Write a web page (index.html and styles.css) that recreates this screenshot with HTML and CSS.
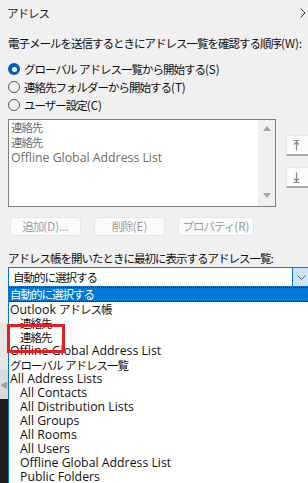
FILE: index.html
```html
<!DOCTYPE html>
<html lang="ja">

<head>
  <meta charset="UTF-8">
  <meta name="viewport" content="width=device-width, initial-scale=1.0">
  <title>アドレス</title>
  <link rel="stylesheet" href="styles.css">
</head>

<body>
  <div class="page">
    <div class="head">
      <span class="headTitle">アドレス</span>
      <svg class="more" width="6" height="10" viewBox="0 0 6 10">
        <polyline points="0.5,0.5 5,5 0.5,9.5" fill="none" stroke="#333" stroke-width="1" />
      </svg>
    </div>

    <div class="caption">電子メールを送信するときにアドレス一覧を確認する順序<span class="lat">(W):</span></div>

    <div class="radios">
      <div class="radio"><span class="dot on"></span>グローバル<span class="lat"> </span>アドレス一覧から開始する<span class="lat">(S)</span></div>
      <div class="radio"><span class="dot"></span>連絡先フォルダーから開始する<span class="lat">(T)</span></div>
      <div class="radio"><span class="dot"></span>ユーザー設定<span class="lat">(C)</span></div>
    </div>

    <div class="listRow">
      <div class="listBox">
        <div class="listItems">
          <div>連絡先</div>
          <div>連絡先</div>
          <div class="en">Offline Global Address List</div>
        </div>
        <div class="vscroll">
          <span class="tri up"></span>
          <span class="tri down"></span>
        </div>
      </div>
      <div class="moveBtns">
        <div class="moveBtn">
          <svg width="7" height="11" viewBox="0 0 7 11">
            <path d="M0.5 0.5H6.5M3.5 1V10.5M1 4.5L3.5 2L6 4.5" fill="none" stroke="#8c8c8c" stroke-width="1.2" />
          </svg>
        </div>
        <div class="moveBtn">
          <svg width="7" height="11" viewBox="0 0 7 11">
            <path d="M0.5 10.5H6.5M3.5 0.5V10M1 6.5L3.5 9L6 6.5" fill="none" stroke="#8c8c8c" stroke-width="1.2" />
          </svg>
        </div>
      </div>
    </div>

    <div class="actions">
      <div class="btn">追加<span class="lat">(D)...</span></div>
      <div class="btn">削除<span class="lat">(E)</span></div>
      <div class="btn wide">プロパティ<span class="lat">(R)</span></div>
    </div>

    <div class="caption2">アドレス帳を開いたときに最初に表示するアドレス一覧<span class="lat">:</span></div>

    <div class="combo">
      <div class="comboText">自動的に選択する</div>
      <div class="comboBtn">
        <svg width="9" height="5" viewBox="0 0 9 5">
          <polyline points="0.5,0.5 4.5,4.5 8.5,0.5" fill="none" stroke="#606060" stroke-width="1" />
        </svg>
      </div>
    </div>

    <div class="dropRow">
      <div class="behind">
        <div class="bh bhTop"></div>
        <div class="bh bhMid"></div>
        <div class="bh bhArrow">◀</div>
        <div class="bh bhDark"></div>
      </div>
      <div class="dropList">
        <div class="opt sel">自動的に選択する</div>
        <div class="opt"><span class="en">Outlook </span>アドレス帳</div>
        <div class="opt sub">連絡先</div>
        <div class="opt sub">連絡先</div>
        <div class="opt en">Offline Global Address List</div>
        <div class="opt">グローバル<span class="lat"> </span>アドレス一覧</div>
        <div class="opt en">All Address Lists</div>
        <div class="opt sub en">All Contacts</div>
        <div class="opt sub en">All Distribution Lists</div>
        <div class="opt sub en">All Groups</div>
        <div class="opt sub en">All Rooms</div>
        <div class="opt sub en">All Users</div>
        <div class="opt sub en">Offline Global Address List</div>
        <div class="opt sub en">Public Folders</div>
        <div class="mark"></div>
      </div>
    </div>
  </div>
</body>

</html>
```

FILE: styles.css
```css
* {
  margin: 0;
  padding: 0;
  box-sizing: border-box;
}
html,
body {
  width: 308px;
  height: 483px;
  overflow: hidden;
  background: #f0f0f0;
}
body {
  font-family: "Noto Sans CJK JP", sans-serif;
  font-size: 11.5px;
  letter-spacing: -1px;
  color: #111;
}
.lat {
  letter-spacing: 0;
}
.en {
  font-family: "Open Sans", "Noto Sans CJK JP", sans-serif;
  font-size: 12.3px;
  letter-spacing: 0;
}
.page {
  width: 308px;
  height: 483px;
  overflow: hidden;
}

/* header */
.head {
  height: 26px;
  padding: 0 2px 0 7px;
  display: flex;
  align-items: center;
  justify-content: space-between;
}
.headTitle {
  color: #222;
}

.caption {
  margin-top: 9px;
  padding-left: 8px;
  height: 16px;
  line-height: 16px;
  white-space: nowrap;
}

/* radios */
.radios {
  margin-top: 9px;
}
.radio {
  height: 18px;
  display: flex;
  align-items: center;
  padding-left: 8px;
  white-space: pre;
}
.dot {
  width: 12px;
  height: 12px;
  border-radius: 50%;
  border: 1px solid #5c5c5c;
  margin-right: 4px;
  flex: none;
}
.dot.on {
  border: none;
  background: #005fb8;
  display: flex;
  align-items: center;
  justify-content: center;
}
.dot.on::after {
  content: "";
  width: 5px;
  height: 5px;
  border-radius: 50%;
  background: #fff;
}

/* list box */
.listRow {
  margin-top: 5px;
  display: flex;
  padding-left: 8px;
}
.listBox {
  flex: none;
  width: 268px;
  height: 88px;
  border: 1px solid #7f7f7f;
  background: #fff;
  display: flex;
}
.listItems {
  flex: 1;
  padding-left: 2px;
  color: #6e6e6e;
  line-height: 15px;
}
.vscroll {
  width: 17px;
  background: #f0f0f0;
  display: flex;
  flex-direction: column;
  justify-content: space-between;
  align-items: center;
  padding: 6px 0 8px;
}
.tri {
  width: 0;
  height: 0;
  border-left: 4px solid transparent;
  border-right: 4px solid transparent;
}
.tri.up {
  border-bottom: 5px solid #a6a6a6;
}
.tri.down {
  border-top: 5px solid #a6a6a6;
}
.moveBtns {
  flex: none;
  margin-left: 10px;
  padding-top: 16px;
  display: flex;
  flex-direction: column;
  gap: 11px;
}
.moveBtn {
  width: 30px;
  height: 21px;
  background: #fbfbfb;
  border: 1px solid #e6e6e6;
  border-bottom: 2px solid #a9a9a9;
  padding: 4px 0 0 6px;
}
.moveBtn svg {
  display: block;
}

/* buttons */
.actions {
  margin-top: 10px;
  padding-left: 10px;
  display: flex;
  gap: 13px;
}
.btn {
  flex: none;
  width: 71px;
  height: 19px;
  border: 1px solid #e6e6e6;
  border-radius: 4px;
  background: #fbfbfb;
  color: #9e9e9e;
  text-align: center;
  line-height: 17px;
  white-space: nowrap;
}
.btn.wide {
  width: 76px;
}

.caption2 {
  margin-top: 14px;
  padding-left: 8px;
  height: 16px;
  line-height: 16px;
  white-space: nowrap;
}

/* combo */
.combo {
  margin: 1px 0 0 8px;
  width: 310px;
  height: 20px;
  border: 1px solid #0078d4;
  background: #fff;
  display: flex;
}
.comboText {
  flex: 1;
  padding-left: 4px;
  line-height: 18px;
}
.comboBtn {
  flex: none;
  width: 25px;
  background: #cce4f7;
  border-left: 1px solid #0078d4;
  padding: 7px 0 0 4px;
}
.comboBtn svg {
  display: block;
}

/* dropdown */
.dropRow {
  display: flex;
  height: 200px;
}
.behind {
  flex: none;
  width: 8px;
  display: flex;
  flex-direction: column;
}
.bh {
  flex: none;
}
.bhTop {
  height: 36px;
  background: #f0f0f0;
}
.bhMid {
  height: 47px;
  background: #e6e6e6;
}
.bhArrow {
  height: 29px;
  background: #dadada;
  color: #9c9c9c;
  font-size: 8px;
  line-height: 29px;
  letter-spacing: 0;
  overflow: hidden;
}
.bhDark {
  flex: 1;
  background: #1f1f1f;
}
.dropList {
  flex: none;
  position: relative;
  width: 310px;
  background: #fff;
  border-left: 1px solid #0078d4;
}
.opt {
  height: 14px;
  line-height: 14px;
  padding-left: 1px;
  white-space: pre;
}
.opt.sub {
  padding-left: 11px;
}
.opt.sel {
  height: 15px;
  line-height: 13px;
  background: #0078d7;
  color: #fff;
  border: 1px dotted #1a1a1a;
  border-left: none;
}
.mark {
  position: absolute;
  left: -2px;
  top: 37px;
  width: 58px;
  height: 29px;
  border: 3px solid #e81e25;
}
```
